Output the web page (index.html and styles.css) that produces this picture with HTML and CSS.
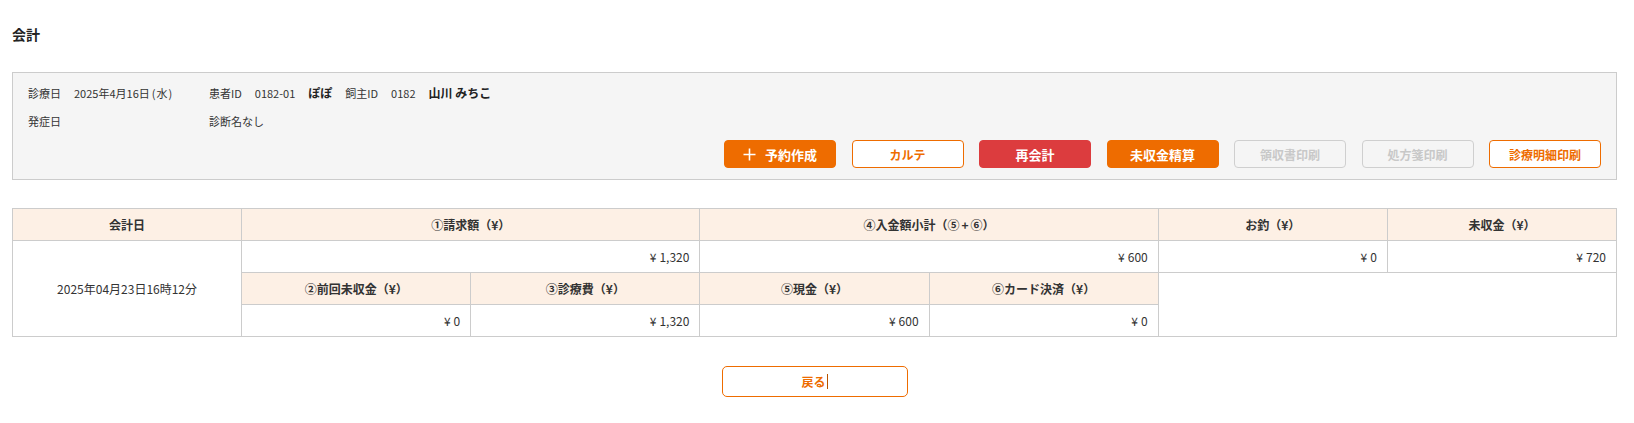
FILE: index.html
```html
<!DOCTYPE html>
<html lang="ja">
<head>
<meta charset="utf-8">
<title>会計</title>
<link rel="stylesheet" href="styles.css">
</head>
<body>
<div class="page">
  <h1 class="title">会計</h1>

  <section class="info-box">
    <div class="info-row">
      <div class="info-group first">
        <span class="label">診療日</span>
        <span class="value">2025年4月16日<span class="paren">(水)</span></span>
      </div>
      <div class="info-group">
        <span class="label">患者ID</span>
        <span class="value">0182-01</span>
        <span class="value strong">ぽぽ</span>
        <span class="label">飼主ID</span>
        <span class="value">0182</span>
        <span class="value strong">山川 みちこ</span>
      </div>
    </div>
    <div class="info-row">
      <div class="info-group first">
        <span class="label">発症日</span>
      </div>
      <div class="info-group">
        <span class="value">診断名なし</span>
      </div>
    </div>
    <div class="actions">
      <button class="btn btn-fill btn-orange">
        <svg class="plus" width="13" height="13" viewBox="0 0 13 13"><path d="M6.5 0.5v12M0.5 6.5h12" stroke="#fff" stroke-width="1.6" fill="none"/></svg>
        <span>予約作成</span>
      </button>
      <button class="btn btn-outline">カルテ</button>
      <button class="btn btn-fill btn-red">再会計</button>
      <button class="btn btn-fill btn-orange">未収金精算</button>
      <button class="btn btn-disabled" disabled>領収書印刷</button>
      <button class="btn btn-disabled" disabled>処方箋印刷</button>
      <button class="btn btn-outline">診療明細印刷</button>
    </div>
  </section>

  <table class="ledger">
    <colgroup>
      <col><col><col><col><col><col><col>
    </colgroup>
    <tr>
      <th>会計日</th>
      <th colspan="2">①請求額（¥）</th>
      <th colspan="2">④入金額小計（⑤<span class="op">+</span>⑥）</th>
      <th>お釣（¥）</th>
      <th>未収金（¥）</th>
    </tr>
    <tr>
      <td class="date" rowspan="3">2025年04月23日16時12分</td>
      <td class="num" colspan="2"><span class="yen">¥</span>1,320</td>
      <td class="num" colspan="2"><span class="yen">¥</span>600</td>
      <td class="num"><span class="yen">¥</span>0</td>
      <td class="num"><span class="yen">¥</span>720</td>
    </tr>
    <tr>
      <th>②前回未収金（¥）</th>
      <th>③診療費（¥）</th>
      <th>⑤現金（¥）</th>
      <th>⑥カード決済（¥）</th>
      <td class="blank" colspan="2" rowspan="2"></td>
    </tr>
    <tr>
      <td class="num"><span class="yen">¥</span>0</td>
      <td class="num"><span class="yen">¥</span>1,320</td>
      <td class="num"><span class="yen">¥</span>600</td>
      <td class="num"><span class="yen">¥</span>0</td>
    </tr>
  </table>

  <div class="back-wrap">
    <button class="btn-back">戻る<span class="caret"></span></button>
  </div>
</div>
</body>
</html>
```

FILE: styles.css
```css
* { box-sizing: border-box; }

html, body {
  margin: 0;
  padding: 0;
  background: #fff;
}

body {
  font-family: "Noto Sans CJK JP", "Noto Sans", sans-serif;
  color: #333;
}

.page {
  padding: 24px 17px 0 12px;
}

.title {
  margin: 0 0 28px;
  font-size: 14px;
  line-height: 20px;
  font-weight: 700;
  color: #222;
}

.info-box {
  border: 1px solid #cccccc;
  background: #f5f5f5;
  padding: 10px 15px 11px 15px;
}

.info-row {
  display: flex;
  height: 20px;
  align-items: center;
  font-size: 11px;
  line-height: 20px;
}

.info-row + .info-row {
  margin-top: 8px;
}

.info-group {
  display: flex;
  gap: 13px;
  align-items: center;
}

.info-group.first {
  width: 181px;
}

.paren {
  margin-left: 2px;
  letter-spacing: 1px;
}

.strong {
  font-weight: 700;
  font-size: 12px;
  color: #222;
}

.actions {
  margin-top: 9px;
  display: flex;
  justify-content: flex-end;
  gap: 15.5px;
}

.btn {
  width: 112px;
  height: 28px;
  border-radius: 4px;
  font-family: inherit;
  font-size: 12px;
  font-weight: 700;
  display: flex;
  align-items: center;
  justify-content: center;
  gap: 9px;
  padding: 0;
  cursor: pointer;
}

.btn-fill {
  border: 1px solid transparent;
  color: #fff;
  font-size: 13px;
}

.btn-orange {
  background: #ee6c00;
  border-color: #ee6c00;
}

.btn-red {
  background: #dc3c3e;
  border-color: #dc3c3e;
}

.btn-outline {
  background: #fff;
  border: 1px solid #ee6c00;
  color: #ee6c00;
}

.btn-disabled {
  background: #f5f5f5;
  border: 1px solid #cfcfcf;
  color: #c8c8c8;
  cursor: default;
}

.plus {
  display: block;
  flex: none;
}

.ledger {
  margin-top: 28px;
  width: 100%;
  table-layout: fixed;
  border-collapse: collapse;
  font-size: 12px;
}

.ledger th,
.ledger td {
  border: 1px solid #cccccc;
  height: 32px;
  padding: 0 10px;
  line-height: 16px;
}

.ledger th {
  background: #fdf0e5;
  font-weight: 700;
  text-align: center;
  color: #333;
}

.op {
  margin: 0 2px;
}

.ledger td.num {
  text-align: right;
}

.yen {
  margin-right: 3px;
}

.ledger td.date {
  text-align: center;
}

.back-wrap {
  margin-top: 29px;
  display: flex;
  justify-content: center;
}

.btn-back {
  width: 186px;
  height: 31px;
  border: 1px solid #ee6c00;
  border-radius: 5px;
  background: #fff;
  color: #ee6c00;
  font-family: inherit;
  font-size: 12px;
  font-weight: 700;
  display: flex;
  align-items: center;
  justify-content: center;
  padding: 0;
}

.caret {
  display: inline-block;
  width: 1px;
  height: 15px;
  background: #b85200;
  margin-left: 1px;
}
```
